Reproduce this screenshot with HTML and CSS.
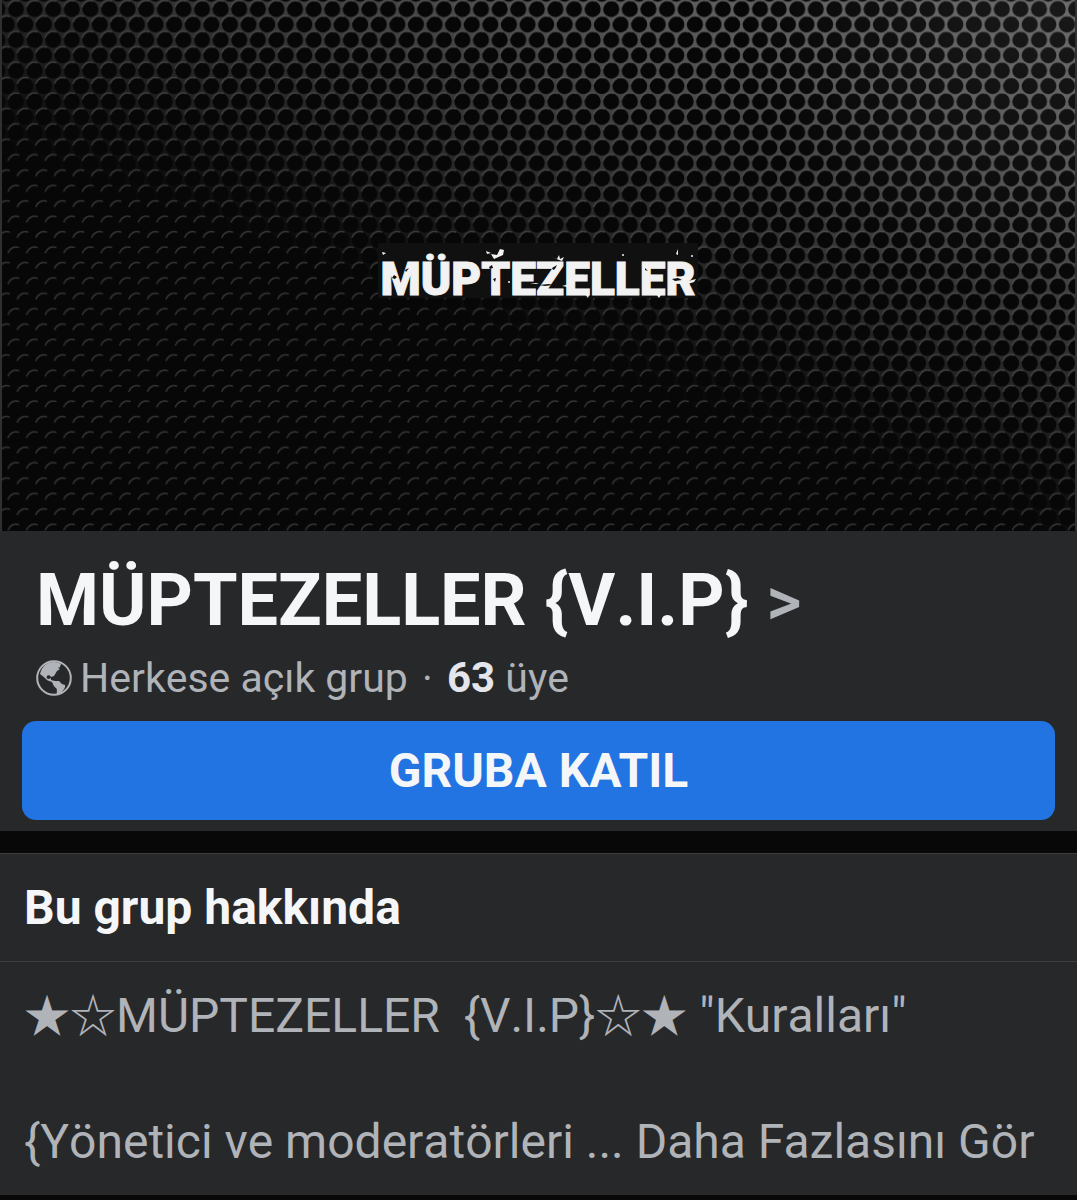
FILE: index.html
```html
<!DOCTYPE html>
<html lang="tr">
<head>
    <meta charset="UTF-8">
    <meta name="viewport" content="width=device-width, initial-scale=1.0">
    <title>MÜPTEZELLER {V.I.P}</title>
    <link rel="stylesheet" href="styles.css">
</head>
<body>
    <header class="cover">
        <svg class="cover-art" viewBox="0 0 1073 531" role="img" aria-label="MÜPTEZELLER">
            <defs>
                <!-- metal mesh: plate with round holes -->
                <pattern id="mesh" width="18.6" height="30.8" patternUnits="userSpaceOnUse" patternTransform="translate(4.7 -6.4)">
                    <path fill="#6c6c6c" fill-rule="evenodd" d="M0 0h18.6v30.8H0z M1.2 15.4a8.1 8.1 0 1 0 16.2 0a8.1 8.1 0 1 0 -16.2 0z M0 0v8.1a8.1 8.1 0 0 0 8.1 -8.1z M10.5 0a8.1 8.1 0 0 0 8.1 8.1V0z M0 30.8h8.1a8.1 8.1 0 0 0 -8.1 -8.1z M10.5 30.8h8.1v-8.1a8.1 8.1 0 0 0 -8.1 8.1z"/>
                </pattern>
                <!-- lit upper left edge of each hole -->
                <pattern id="rims" width="18.6" height="30.8" patternUnits="userSpaceOnUse" patternTransform="translate(4.7 -6.4)">
                    <g fill="none" stroke="#343434" stroke-width="1.5" stroke-linecap="round">
                        <path d="M1.4 12.6a8.4 8.4 0 0 1 10.4 -5.2"/>
                        <path d="M-7.9 28a8.4 8.4 0 0 1 10.4 -5.2M10.7 28a8.4 8.4 0 0 1 10.4 -5.2"/>
                    </g>
                </pattern>
                <linearGradient id="light" gradientUnits="userSpaceOnUse" x1="1073" y1="0" x2="889" y2="492">
                    <stop offset="0" stop-color="#fff" stop-opacity="1"/>
                    <stop offset=".3" stop-color="#fff" stop-opacity=".82"/>
                    <stop offset=".5" stop-color="#fff" stop-opacity=".58"/>
                    <stop offset=".7" stop-color="#fff" stop-opacity=".34"/>
                    <stop offset=".88" stop-color="#fff" stop-opacity=".12"/>
                    <stop offset="1" stop-color="#fff" stop-opacity="0"/>
                </linearGradient>
                <mask id="lightMask" maskUnits="userSpaceOnUse" x="0" y="0" width="1073" height="531">
                    <rect width="1073" height="531" fill="url(#light)"/>
                </mask>
                <radialGradient id="glow" gradientUnits="userSpaceOnUse" cx="1040" cy="0" r="300">
                    <stop offset="0" stop-color="#191919"/>
                    <stop offset="1" stop-color="#070707"/>
                </radialGradient>
            </defs>
            <rect width="1073" height="531" fill="url(#glow)"/>
            <rect width="1073" height="531" fill="url(#rims)"/>
            <rect width="1073" height="531" fill="url(#mesh)" mask="url(#lightMask)"/>
            <rect x="376" y="243" width="320" height="55" fill="#101010"/>
            <text class="cover-name" x="536" y="295" text-anchor="middle">MÜPTEZELLER</text>
            <!-- chips and scratches over the lettering -->
            <g fill="#101010">
                <path d="M392 275l3 2-2 2-3-1zM403 270l4-2-3 4zM433 253l1 14 1 5-2-7zM487 267l3-2 1 3-3 1zM491 279l3-1-1 4zM537 285l10-1 4 1-8 1zM550 268l5-3-2 4-2 1zM582 272l2 1-1 2zM612 277l2-1v3zM643 268l3 3-3-1zM670 279l6-1 4 2-7 1z"/>
            </g>
            <g fill="#f2f2f2">
                <path d="M380 252l4 1-3 2zM489 254l6 1 3-6 4 1-1 5-9 4zM484 251l5 2-4 1zM528 284l6-1 3 1zM549 257l6 2 2-4 1 4 4-2-2 4zM560 286l7-2-1 3zM583 294l3 4 1-3zM654 294l3 4 2-3zM686 281l8-2-2 3-6 2zM674 254l2-5v6z"/>
                <circle cx="507" cy="282" r="1"/>
                <circle cx="621" cy="255" r="1"/>
                <circle cx="690" cy="256" r="1"/>
            </g>
        </svg>
    </header>

    <section class="group">
        <h1><a href="#">MÜPTEZELLER {V.I.P} <span class="arrow">&gt;</span></a></h1>
        <p class="meta">
            <svg class="globe" viewBox="0 0 36 36" aria-hidden="true">
                <circle cx="18" cy="18" r="16.8"/>
                <path d="M4 14C6 6 11 2 18 2c3 0 5 1 7 2l-1 3-2 1 2 1-3 2-3 5-3 1c-1-2-3-2-4-1-1 2 0 3 2 3l2-1 0 2 4 1 4 0 3 3 3 1c1 2-2 6-5 9l-3 1c-1-2 1-5-1-7-2-1-3-4-4-6-3-1-6-2-7-4z"/>
            </svg>
            <span>Herkese açık grup <span class="dot">·</span> <b>63</b> üye</span>
        </p>
        <button class="join" type="button">GRUBA KATIL</button>
    </section>

    <section class="about">
        <h2>Bu grup hakkında</h2>
        <div class="about-text">
            <p><span class="stars">★☆</span>MÜPTEZELLER&nbsp; {V.I.P}<span class="stars">☆★</span> "Kuralları"</p>
            <p>{Yönetici ve moderatörleri ... <a href="#">Daha Fazlasını Gör</a></p>
        </div>
    </section>
</body>
</html>
```
FILE: styles.css
```css
body {
    margin: 0;
    background-color: #080808;
    color: #b0b3b8;
    font-family: Roboto, "Noto Sans CJK JP", sans-serif;
    font-kerning: none;
}
h1, h2, p {
    margin: 0;
}
a {
    color: inherit;
    text-decoration: none;
}
.cover {
    padding: 0 2px;
    background-color: #303031;
}
.cover-art {
    display: block;
    width: 100%;
}
.cover-name {
    font-size: 46px;
    font-weight: 900;
    fill: #f2f2f2;
    stroke: #f2f2f2;
    stroke-width: 1px;
}
.group {
    padding: 24px 22px 11px;
    background-color: #27282a;
}
.group h1 {
    padding: 0 14px;
    color: #f5f6f7;
    font-size: 72px;
    line-height: 92px;
    font-weight: 700;
}
.arrow {
    color: #b0b3b8;
    font-size: 68px;
    font-weight: 500;
}
.meta {
    display: flex;
    align-items: center;
    gap: 8px;
    padding: 0 14px 13px;
    font-size: 41px;
    line-height: 60px;
}
.meta b {
    color: #e4e6eb;
    font-size: 42px;
}
.dot {
    margin: 0 4px;
}
.globe {
    width: 36px;
    height: 36px;
    fill: #b0b3b8;
}
.globe circle {
    fill: none;
    stroke: #b0b3b8;
    stroke-width: 2;
}
.join {
    display: block;
    width: 100%;
    height: 99px;
    border: none;
    border-radius: 14px;
    background-color: #2174e1;
    color: #f5f6f7;
    font-family: inherit;
    font-size: 48px;
    font-weight: 700;
    cursor: pointer;
}
.about {
    margin-top: 22px;
    border-top: 1px solid #3c3d3f;
    background-color: #27282a;
}
.about h2 {
    padding: 22px 24px;
    border-bottom: 1px solid #3c3d3f;
    color: #f5f6f7;
    font-size: 48px;
    line-height: 63px;
}
.about-text {
    display: flex;
    flex-direction: column;
    gap: 63px;
    padding: 22px 24px;
    font-size: 48px;
    line-height: 63px;
}
.about-text a {
    font-kerning: normal;
}
.stars {
    font-family: "Noto Sans CJK JP", sans-serif;
    font-size: 46px;
    line-height: 1;
}
```
